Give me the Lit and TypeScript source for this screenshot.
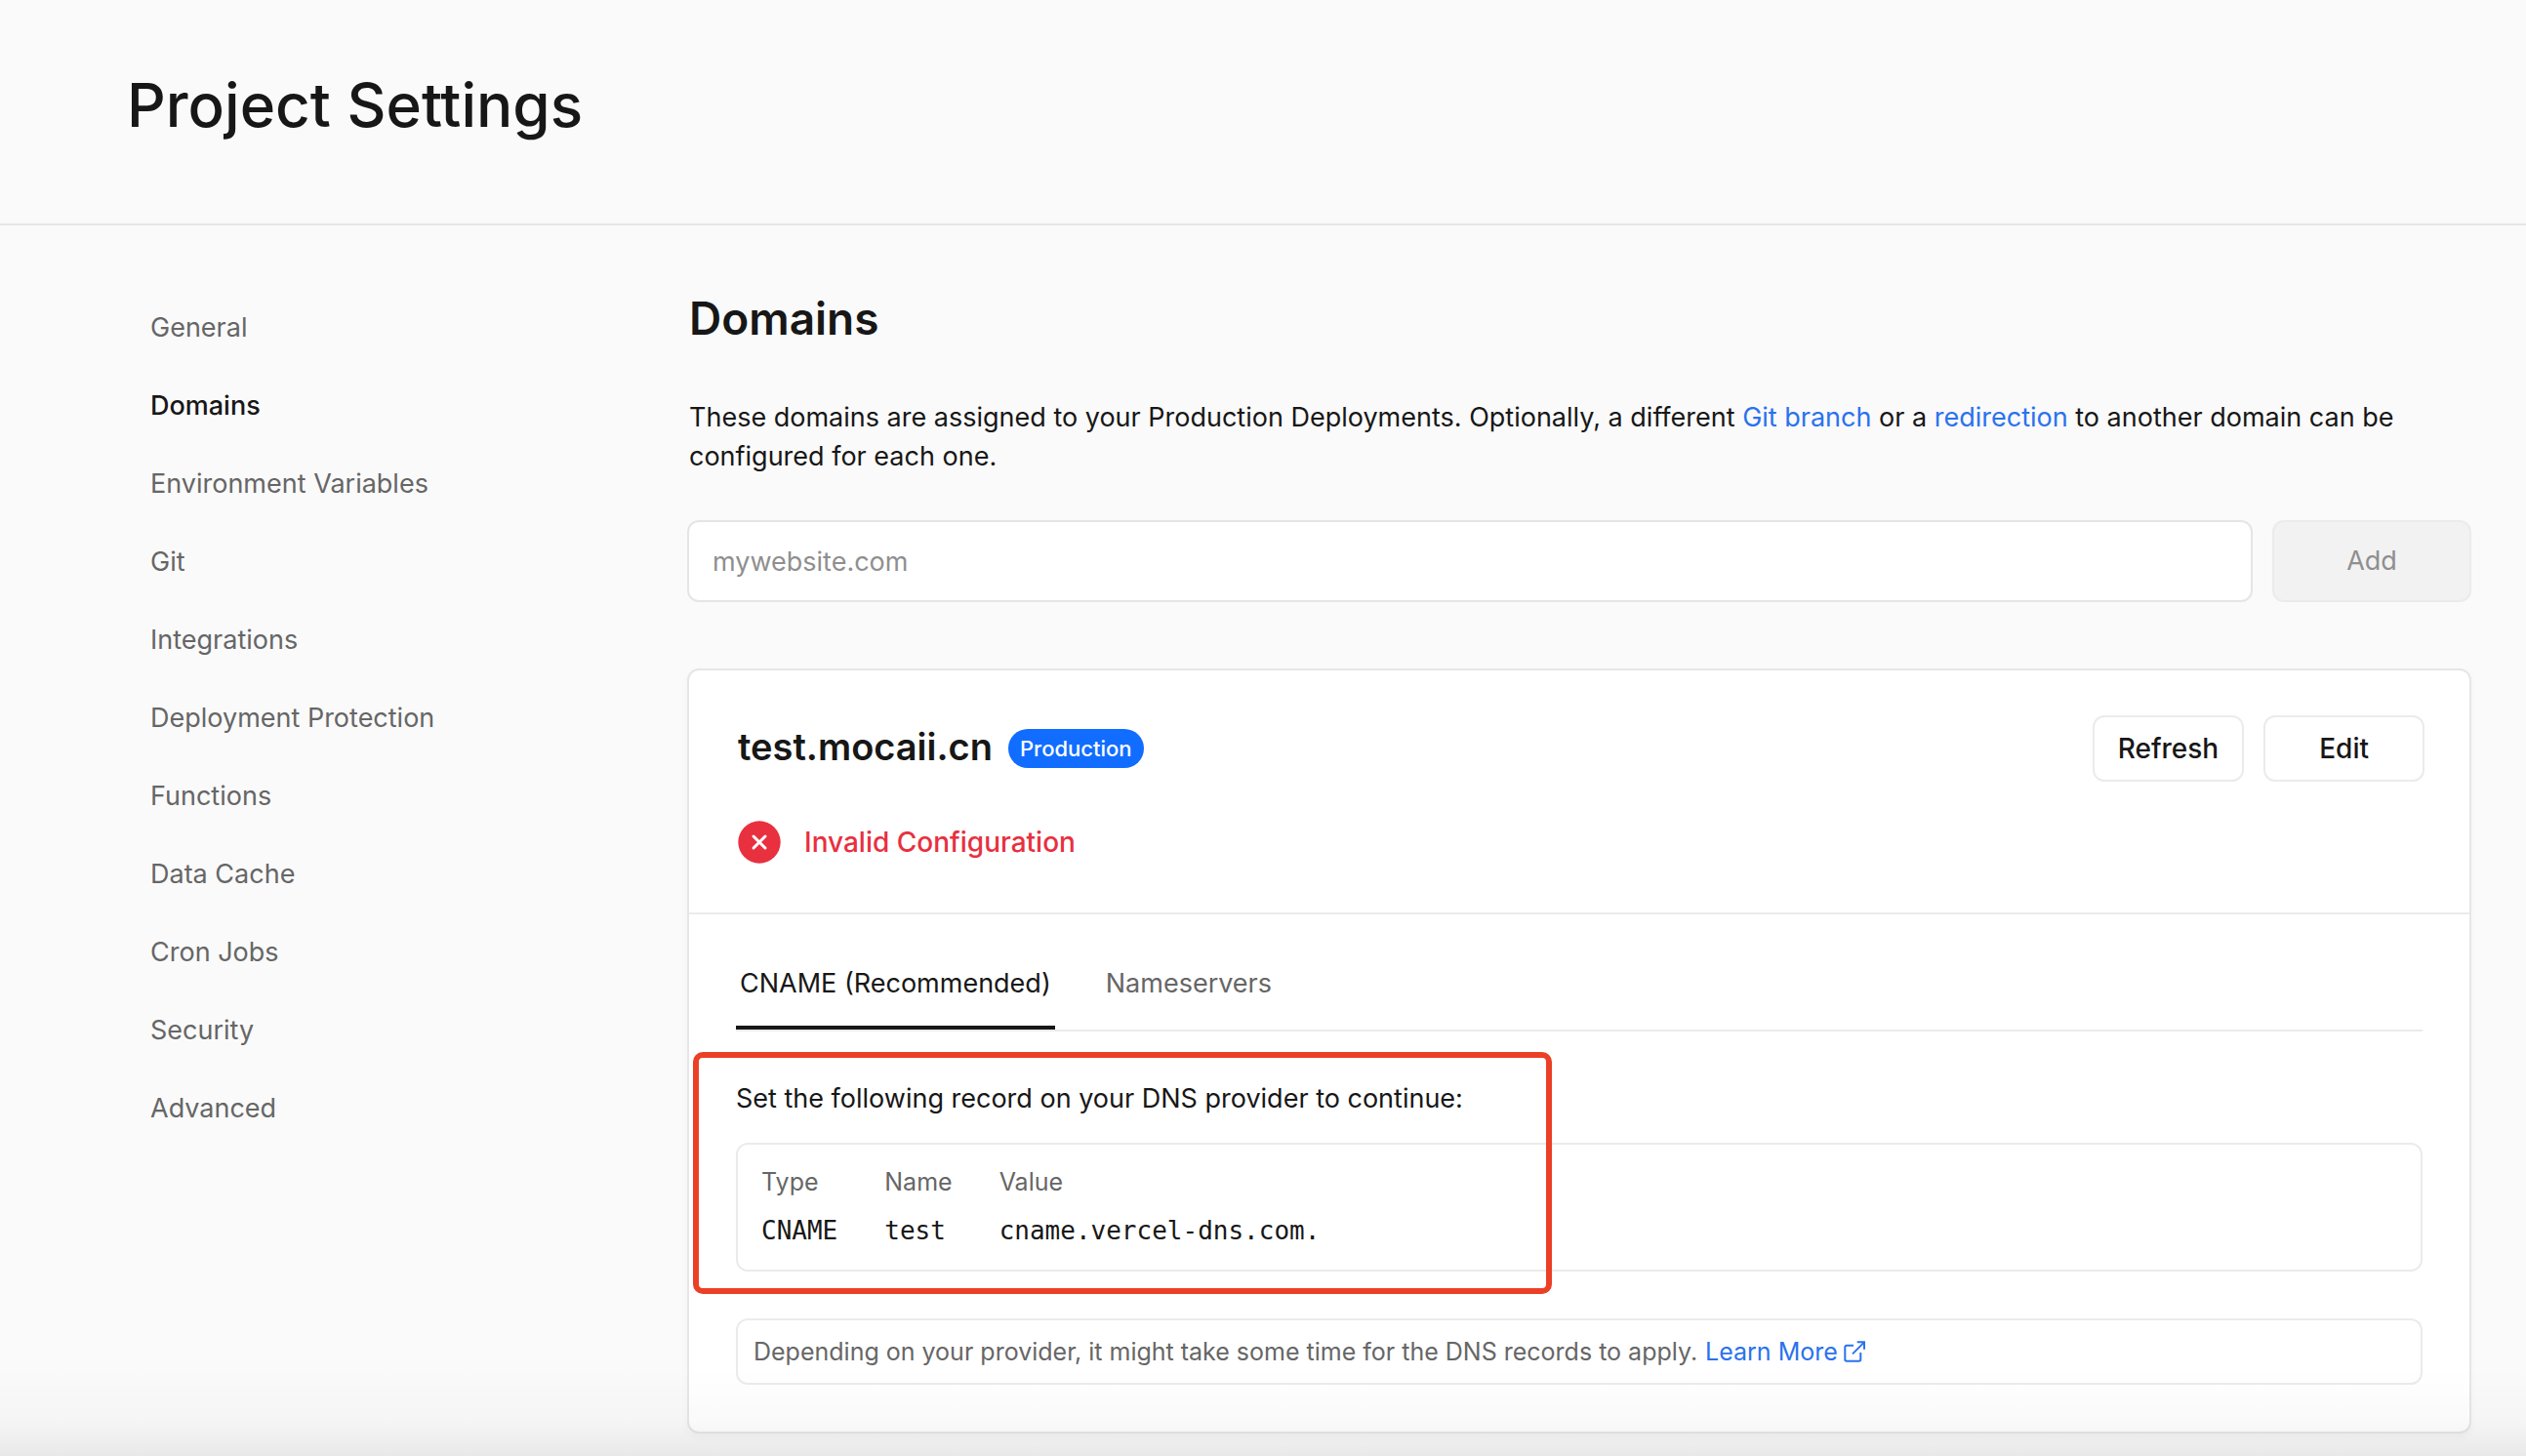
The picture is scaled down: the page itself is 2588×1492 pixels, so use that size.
import { LitElement, html, css } from "lit";
import { customElement, state } from "lit/decorators.js";
import { classMap } from "lit/directives/class-map.js";

const NAV_ITEMS = [
  "General",
  "Domains",
  "Environment Variables",
  "Git",
  "Integrations",
  "Deployment Protection",
  "Functions",
  "Data Cache",
  "Cron Jobs",
  "Security",
  "Advanced",
];

const TABS = ["CNAME (Recommended)", "Nameservers"];

@customElement("domain-card")
export class DomainCard extends LitElement {
  @state() private activeTab = 0;

  static styles = css`
    :host {
      display: block;
      box-sizing: border-box;
      background: #ffffff;
      border: 2px solid #e6e6e6;
      border-radius: 12px;
      box-shadow: 0 4px 8px rgba(0, 0, 0, 0.03);
    }
    * {
      box-sizing: border-box;
    }
    .head {
      display: flex;
      flex-direction: column;
      gap: 40px;
      padding: 46px 46px 50px 50px;
      border-bottom: 2px solid #ebebeb;
    }
    .title-row {
      display: flex;
      align-items: center;
      justify-content: space-between;
    }
    .title {
      display: flex;
      align-items: center;
      gap: 16px;
    }
    h3 {
      margin: 0;
      padding-bottom: 4px;
      font-size: 38px;
      line-height: 64px;
      font-weight: 600;
    }
    .badge {
      padding: 0 12px;
      border-radius: 20px;
      background: #116dff;
      color: #ffffff;
      font-size: 22px;
      line-height: 40px;
      font-weight: 500;
    }
    .actions {
      display: flex;
      gap: 20px;
    }
    .action {
      height: 68px;
      padding: 0 24px;
      border: 2px solid #ebebeb;
      border-radius: 12px;
      background: #ffffff;
      color: #171717;
      font: inherit;
      font-size: 28px;
      font-weight: 500;
    }
    .action.wide {
      padding: 0 55px;
    }
    .status {
      display: flex;
      align-items: center;
      gap: 24px;
      color: #e8303f;
      font-size: 28px;
      font-weight: 500;
      line-height: 44px;
    }
    .status-icon {
      display: block;
      width: 44px;
      height: 44px;
    }
    .body {
      padding: 48px;
    }
    .tabs {
      display: flex;
      gap: 48px;
      border-bottom: 2px solid #ebebeb;
    }
    .tab {
      padding: 0 4px 20px;
      border: 0;
      border-bottom: 4px solid transparent;
      background: none;
      color: #666666;
      font: inherit;
      line-height: 46px;
    }
    .tab.active {
      color: #171717;
      border-bottom-color: #171717;
    }
    .record {
      position: relative;
      padding-top: 49px;
    }
    .highlight {
      position: absolute;
      inset: 21px auto -23px -44px;
      width: 880px;
      border: 6px solid #eb4026;
      border-radius: 10px;
      pointer-events: none;
    }
    .record p {
      margin: 0 0 25px;
    }
    .record-box {
      padding: 13px 24px 15px;
      border: 2px solid #ebebeb;
      border-radius: 12px;
    }
    table {
      border-collapse: collapse;
      font-size: 26px;
      line-height: 50px;
    }
    th,
    td {
      padding: 0 48px 0 0;
      text-align: left;
      font-weight: 400;
    }
    th {
      color: #666666;
      font-size: 25px;
    }
    td {
      font-family: "DejaVu Sans Mono", "Liberation Mono", monospace;
    }
    .note {
      display: flex;
      align-items: center;
      gap: 8px;
      margin-top: 48px;
      padding: 0 16px;
      border: 2px solid #ebebeb;
      border-radius: 12px;
      color: #666666;
      font-size: 25px;
      line-height: 64px;
    }
    .learn {
      display: inline-flex;
      align-items: center;
      gap: 4px;
      color: #2a72ee;
      text-decoration: none;
    }
    .external {
      width: 26px;
      height: 26px;
    }
  `;

  render() {
    return html`
      <div class="head">
        <div class="title-row">
          <div class="title">
            <h3>test.mocaii.cn</h3>
            <span class="badge">Production</span>
          </div>
          <div class="actions">
            <button class="action" type="button">Refresh</button>
            <button class="action wide" type="button">Edit</button>
          </div>
        </div>
        <div class="status">
          <svg class="status-icon" viewBox="0 0 44 44" aria-hidden="true">
            <circle cx="22" cy="22" r="21.7" fill="#e8303f" />
            <path d="M16 16 28 28M28 16 16 28" stroke="#fff" stroke-width="3" stroke-linecap="round" />
          </svg>
          <span>Invalid Configuration</span>
        </div>
      </div>
      <div class="body">
        <div class="tabs" role="tablist">
          ${TABS.map(
            (label, i) => html`<button
              class=${classMap({ tab: true, active: i === this.activeTab })}
              type="button"
              role="tab"
              aria-selected=${i === this.activeTab ? "true" : "false"}
              @click=${() => (this.activeTab = i)}
            >${label}</button>`
          )}
        </div>
        <div class="record">
          <p>Set the following record on your DNS provider to continue:</p>
          <div class="record-box">
            <table>
              <thead>
                <tr><th scope="col">Type</th><th scope="col">Name</th><th scope="col">Value</th></tr>
              </thead>
              <tbody>
                <tr><td>CNAME</td><td>test</td><td>cname.vercel-dns.com.</td></tr>
              </tbody>
            </table>
          </div>
          <div class="highlight"></div>
        </div>
        <div class="note">
          <span>Depending on your provider, it might take some time for the DNS records to apply.</span>
          <a class="learn" href="#learn-more">Learn More
            <svg class="external" viewBox="0 0 26 26" fill="none" stroke="currentColor" stroke-width="2" aria-hidden="true">
              <path d="M12 6.7H5a1.7 1.7 0 0 0-1.7 1.7V21a1.7 1.7 0 0 0 1.7 1.7h12.6a1.7 1.7 0 0 0 1.7-1.7v-7M11 15.4 22.8 3.6M15.7 3.3H23v7.4" />
            </svg>
          </a>
        </div>
      </div>
    `;
  }
}

@customElement("app-root")
export class AppRoot extends LitElement {
  static styles = css`
    :host {
      display: flex;
      flex-direction: column;
      position: relative;
      min-height: 100vh;
      background: #fafafa;
      color: #171717;
      font-family: Inter, "Liberation Sans", sans-serif;
      font-size: 27px;
      line-height: 40px;
    }
    * {
      box-sizing: border-box;
    }
    .page-header {
      padding: 68px 56px 81px 130px;
      border-bottom: 2px solid #e6e6e6;
    }
    h1 {
      margin: 0;
      font-size: 62px;
      line-height: 80px;
      font-weight: 500;
    }
    .layout {
      display: grid;
      grid-template-columns: 526px minmax(0, 1fr);
      gap: 48px;
      padding: 64px 56px 22px 130px;
    }
    nav {
      display: flex;
      flex-direction: column;
      padding-top: 1px;
    }
    .nav-link {
      padding: 20px 24px;
      color: #666666;
      text-decoration: none;
    }
    .nav-link.active {
      color: #171717;
      font-weight: 500;
    }
    h2 {
      margin: 0 0 51px;
      padding-left: 2px;
      font-size: 46px;
      line-height: 62px;
      font-weight: 600;
    }
    .intro {
      margin: 0 0 45px;
      padding-left: 2px;
    }
    .intro a {
      color: #2a72ee;
      text-decoration: none;
    }
    .add-form {
      display: flex;
      gap: 20px;
      margin-bottom: 68px;
    }
    .domain-input {
      flex: 1;
      min-width: 0;
      height: 84px;
      padding: 0 24px;
      border: 2px solid #e5e5e5;
      border-radius: 12px;
      background: #ffffff;
      color: #171717;
      font: inherit;
      outline: none;
    }
    .domain-input::placeholder {
      color: #8f8f8f;
      opacity: 1;
    }
    .add {
      width: 204px;
      height: 84px;
      border: 2px solid #ebebeb;
      border-radius: 12px;
      background: #f2f2f2;
      color: #8f8f8f;
      font: inherit;
    }
    .fade {
      position: absolute;
      inset: auto 0 0 0;
      height: 90px;
      background: linear-gradient(to bottom, rgba(0, 0, 0, 0), rgba(0, 0, 0, 0.02) 60%, rgba(0, 0, 0, 0.07));
      pointer-events: none;
    }
  `;

  render() {
    return html`
      <header class="page-header"><h1>Project Settings</h1></header>
      <div class="layout">
        <nav aria-label="Project settings">
          ${NAV_ITEMS.map(
            (item) => html`<a
              class=${classMap({ "nav-link": true, active: item === "Domains" })}
              href="#${item.toLowerCase().replace(/ /g, "-")}"
            >${item}</a>`
          )}
        </nav>
        <main>
          <h2>Domains</h2>
          <p class="intro">
            These domains are assigned to your Production Deployments. Optionally, a different
            <a href="#git-branch">Git branch</a> or a <a href="#redirection">redirection</a> to another
            domain can be configured for each one.
          </p>
          <form class="add-form" @submit=${(e: Event) => e.preventDefault()}>
            <input class="domain-input" type="text" aria-label="Domain" placeholder="mywebsite.com" />
            <button class="add" type="submit" disabled>Add</button>
          </form>
          <domain-card></domain-card>
        </main>
      </div>
      <div class="fade"></div>
    `;
  }
}
